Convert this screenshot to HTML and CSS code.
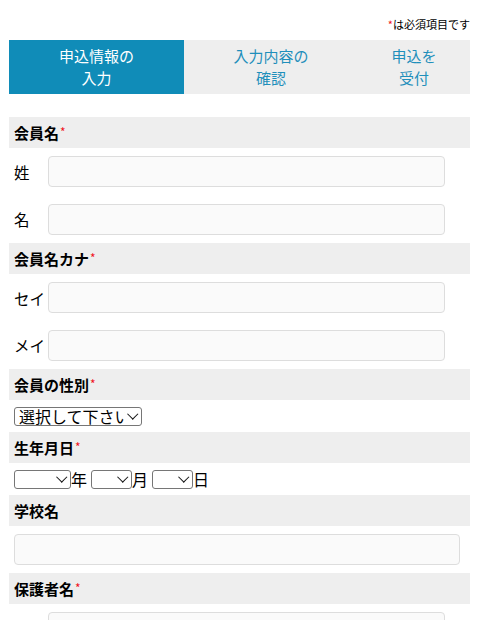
FILE: index.html
```html
<!DOCTYPE html>
<html lang="ja">
<head>
<meta charset="utf-8">
<title>申込情報の入力</title>
<link rel="stylesheet" href="styles.css">
</head>
<body>
<div class="page">
  <p class="note"><span class="req">*</span>は必須項目です</p>
  <div class="steps">
    <div class="step active">申込情報の<br>入力</div>
    <div class="step">入力内容の<br>確認</div>
    <div class="step">申込を<br>受付</div>
  </div>

  <form class="form">
    <div class="head">会員名<span class="req">*</span></div>
    <div class="row"><span class="lbl">姓</span><input class="txt" type="text"></div>
    <div class="row"><span class="lbl">名</span><input class="txt" type="text"></div>

    <div class="head">会員名カナ<span class="req">*</span></div>
    <div class="row"><span class="lbl">セイ</span><input class="txt" type="text"></div>
    <div class="row"><span class="lbl">メイ</span><input class="txt" type="text"></div>

    <div class="head">会員の性別<span class="req">*</span></div>
    <div class="selrow">
      <span class="selwrap"><select class="sel gender"><option>選択して下さい</option><option>男性</option><option>女性</option></select></span>
    </div>

    <div class="head">生年月日<span class="req">*</span></div>
    <div class="selrow">
      <span class="selwrap"><select class="sel year"><option></option></select></span><span class="unit">年</span>
      <span class="selwrap"><select class="sel md"><option></option></select></span><span class="unit">月</span>
      <span class="selwrap"><select class="sel md"><option></option></select></span><span class="unit">日</span>
    </div>

    <div class="head">学校名</div>
    <div class="row wide"><input class="txt full" type="text"></div>

    <div class="head">保護者名<span class="req">*</span></div>
    <div class="row"><span class="lbl">姓</span><input class="txt" type="text"></div>
    <div class="row"><span class="lbl">名</span><input class="txt" type="text"></div>
  </form>
</div>
</body>
</html>
```
FILE: styles.css
```css
* { box-sizing: border-box; }
html, body {
  margin: 0;
  padding: 0;
  background: #fff;
}
body {
  font-family: "Noto Sans CJK JP", "Noto Sans", sans-serif;
  color: #000;
}
.page {
  padding: 0 8px 0 9px;
}
.note {
  margin: 16px 0 8px;
  font-size: 11px;
  line-height: 16px;
  text-align: right;
}
.req {
  color: #f0141e;
  font-weight: normal;
}
.steps {
  display: grid;
  grid-template-columns: 175px 174px 1fr;
  background: #eeeeee;
}
.step {
  padding: 5px 0;
  font-size: 15px;
  line-height: 22px;
  text-align: center;
  color: #1f8fbb;
}
.step.active {
  background: #108cb8;
  color: #fff;
}
.form {
  margin-top: 23px;
}
.head {
  height: 31px;
  display: flex;
  align-items: center;
  padding-left: 5px;
  background: #eeeeee;
  font-size: 15px;
  font-weight: bold;
}
.head .req {
  font-size: 12px;
  margin-left: 1px;
  position: relative;
  top: -1px;
}
.row {
  display: flex;
  align-items: center;
  padding: 8px 0 8.5px;
}
.row.wide {
  padding: 8px 0 8px 5px;
}
.lbl {
  width: 39px;
  padding-left: 5px;
  font-size: 15.5px;
}
.txt {
  width: 397px;
  height: 31px;
  border: 1px solid #dddddd;
  border-radius: 4px;
  background: #fafafa;
  font: inherit;
  font-size: 15px;
}
.txt.full {
  width: 446px;
}
.selrow {
  height: 32px;
  display: flex;
  align-items: center;
  padding-left: 5px;
  font-size: 16px;
}
.selwrap {
  position: relative;
  display: block;
  height: 19px;
}
.selwrap::after {
  content: "";
  position: absolute;
  right: 6px;
  top: 3px;
  width: 6.5px;
  height: 6.5px;
  border-right: 1.8px solid #111;
  border-bottom: 1.8px solid #111;
  transform: rotate(45deg);
  pointer-events: none;
}
.sel {
  appearance: none;
  -webkit-appearance: none;
  display: block;
  height: 19px;
  font-family: "Noto Sans CJK JP", sans-serif;
  font-size: 16px;
  line-height: 17px;
  padding: 0 16px 0 4px;
  border: 1px solid #767676;
  border-radius: 3px;
  background: #fff;
  color: #000;
  overflow: hidden;
}
.gender { width: 128px; }
.year { width: 57px; }
.md { width: 41px; }
.unit {
  margin-right: 4px;
}
```
